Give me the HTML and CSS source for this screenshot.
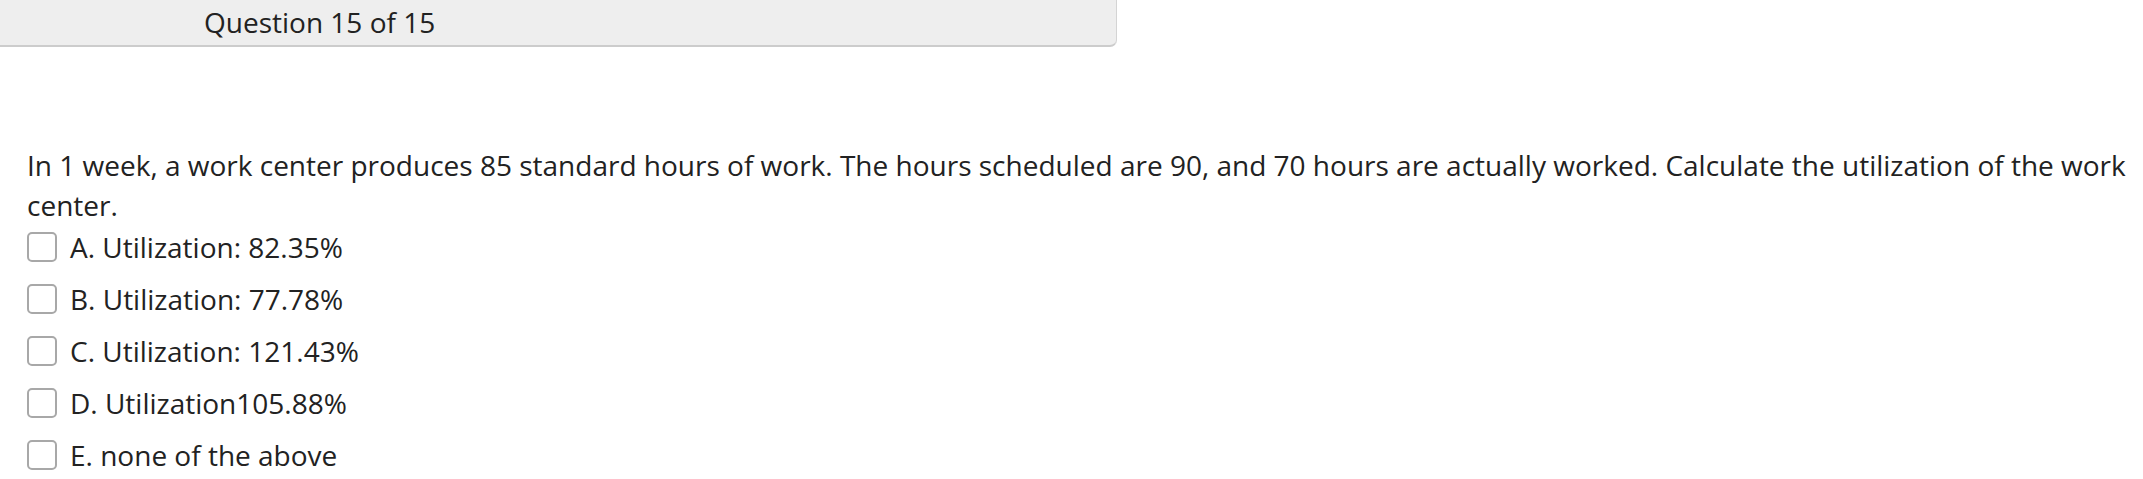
FILE: index.html
```html
<!DOCTYPE html>
<html lang="en">
<head>
<meta charset="utf-8">
<title>Question 15 of 15</title>
<link rel="stylesheet" href="styles.css">
</head>
<body>
<div class="header">
  <span class="header-title">Question 15 of 15</span>
</div>
<div class="question">
  <p class="prompt">In 1 week, a work center produces 85 standard hours of work. The hours scheduled are 90, and 70 hours are actually worked. Calculate the utilization of the work center.</p>
  <ul class="options">
    <li class="option"><span class="box"></span><span class="label">A. Utilization: 82.35%</span></li>
    <li class="option"><span class="box"></span><span class="label">B. Utilization: 77.78%</span></li>
    <li class="option"><span class="box"></span><span class="label">C. Utilization: 121.43%</span></li>
    <li class="option"><span class="box"></span><span class="label">D. Utilization105.88%</span></li>
    <li class="option"><span class="box"></span><span class="label">E. none of the above</span></li>
  </ul>
</div>
</body>
</html>
```

FILE: styles.css
```css
html, body {
  margin: 0;
  padding: 0;
  background: #ffffff;
}
body {
  font-family: "Open Sans", "Liberation Sans", sans-serif;
  color: #222222;
  font-size: 28px;
}
.header {
  width: 1117px;
  height: 47px;
  box-sizing: border-box;
  background: #eeeeee;
  border-bottom: 2px solid #cccccc;
  border-right: 1px solid #d4d4d4;
  border-bottom-right-radius: 7px;
  display: flex;
  align-items: center;
  padding-left: 204px;
}
.header-title {
  line-height: 40px;
  position: relative;
  top: -1px;
}
.question {
  padding: 98px 4px 0 27px;
}
.prompt {
  margin: 0;
  line-height: 40px;
}
.options {
  list-style: none;
  margin: 0;
  padding: 0;
  display: flex;
  flex-direction: column;
  gap: 8px;
}
.option {
  display: flex;
  align-items: center;
  height: 44px;
}
.box {
  width: 30px;
  height: 30px;
  box-sizing: border-box;
  border: 2px solid #a8a8a8;
  border-radius: 5px;
  background: #ffffff;
  flex: none;
  margin-right: 13px;
}
.label {
  line-height: 40px;
}
```
